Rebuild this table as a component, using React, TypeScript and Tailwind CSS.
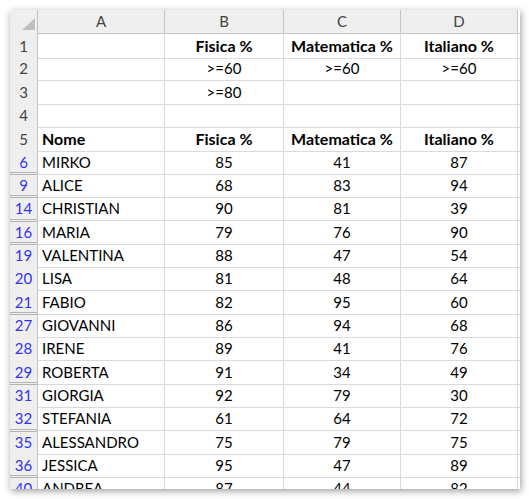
const font = { fontFamily: "Lato, 'Open Sans', sans-serif" };

type Row = {
  n: number;
  a: string;
  b: string;
  c: string;
  d: string;
  bold?: boolean;
};

const rows: Row[] = [
  { n: 1, a: "", b: "Fisica %", c: "Matematica %", d: "Italiano %", bold: true },
  { n: 2, a: "", b: ">=60", c: ">=60", d: ">=60" },
  { n: 3, a: "", b: ">=80", c: "", d: "" },
  { n: 4, a: "", b: "", c: "", d: "" },
  { n: 5, a: "Nome", b: "Fisica %", c: "Matematica %", d: "Italiano %", bold: true },
  { n: 6, a: "MIRKO", b: "85", c: "41", d: "87" },
  { n: 9, a: "ALICE", b: "68", c: "83", d: "94" },
  { n: 14, a: "CHRISTIAN", b: "90", c: "81", d: "39" },
  { n: 16, a: "MARIA", b: "79", c: "76", d: "90" },
  { n: 19, a: "VALENTINA", b: "88", c: "47", d: "54" },
  { n: 20, a: "LISA", b: "81", c: "48", d: "64" },
  { n: 21, a: "FABIO", b: "82", c: "95", d: "60" },
  { n: 27, a: "GIOVANNI", b: "86", c: "94", d: "68" },
  { n: 28, a: "IRENE", b: "89", c: "41", d: "76" },
  { n: 29, a: "ROBERTA", b: "91", c: "34", d: "49" },
  { n: 31, a: "GIORGIA", b: "92", c: "79", d: "30" },
  { n: 32, a: "STEFANIA", b: "61", c: "64", d: "72" },
  { n: 35, a: "ALESSANDRO", b: "75", c: "79", d: "75" },
  { n: 36, a: "JESSICA", b: "95", c: "47", d: "89" },
  { n: 40, a: "ANDREA", b: "87", c: "44", d: "82" },
];

const cols = "grid grid-cols-[28px_127px_119px_117px_117px_2px]";

export default function App() {
  return (
    <div className="w-[529px] h-[499px] bg-white pt-[10px] pl-[10px]" style={font}>
      <div className="w-[510px] h-[479px] overflow-hidden bg-white shadow-[1px_2px_7px_rgba(0,0,0,0.4)]">
        {/* column header */}
        <div className={`${cols} h-[23px] bg-[#efefef] text-[15px] text-[#444]`}>
          <div className="relative border-r border-b border-[#c4c4c4]">
            <div className="absolute right-[2px] bottom-[3px] w-0 h-0 border-l-[13px] border-l-transparent border-b-[12px] border-b-[#c0c0c0]" />
          </div>
          {["A", "B", "C", "D"].map((l) => (
            <div key={l} className="flex items-center justify-center border-r border-b border-[#c4c4c4]">
              {l}
            </div>
          ))}
          <div className="bg-white border-b border-[#c4c4c4]" />
        </div>

        {rows.map((r, i) => {
          const prev = i > 0 ? rows[i - 1].n : r.n - 1;
          const hidden = r.n - prev > 1;
          const filtered = r.n >= 6;
          const txt = r.bold ? "font-bold text-[16px]" : "";
          return (
            <div
              key={r.n}
              className={`${cols} text-[15px] text-black ${i % 3 === 1 ? "h-[24px]" : "h-[23px]"}`}
            >
              <div
                className={`relative flex items-center justify-center pt-[1px] bg-[#efefef] border-r border-b border-[#c4c4c4] ${
                  filtered ? "text-[#3232f5]" : "text-[#444]"
                }`}
              >
                {/* hidden rows marker */}
                {hidden && (
                  <div className="absolute left-0 right-0 -top-[1px] h-[3px] border-t border-b border-[#b4b4b4]" />
                )}
                {r.n}
              </div>
              <div className={`flex items-center pl-[4px] pt-[1px] border-r border-b border-[#dadada] ${txt}`}>
                {r.a}
              </div>
              <div className={`flex items-center justify-center pt-[1px] border-r border-b border-[#dadada] ${txt}`}>
                {r.b}
              </div>
              <div className={`flex items-center justify-center pt-[1px] border-r border-b border-[#dadada] ${txt}`}>
                {r.c}
              </div>
              <div className={`flex items-center justify-center pt-[1px] border-r border-b border-[#dadada] ${txt}`}>
                {r.d}
              </div>
              <div className="border-b border-[#dadada]" />
            </div>
          );
        })}
      </div>
    </div>
  );
}
